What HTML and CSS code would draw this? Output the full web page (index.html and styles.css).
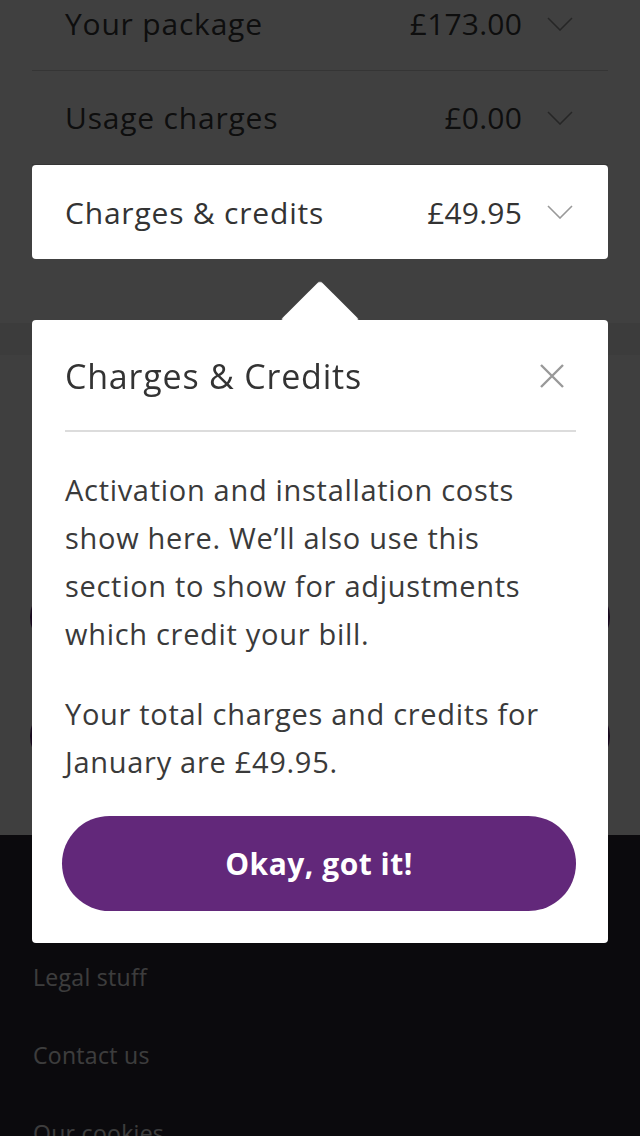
FILE: index.html
```html
<!DOCTYPE html>
<html lang="en">
<head>
<meta charset="utf-8">
<title>Bill breakdown</title>
<link rel="stylesheet" href="styles.css">
</head>
<body>
<main class="page">
  <section class="summary">
    <div class="row">
      <span class="row__label">Your package</span>
      <span class="row__amount">£173.00</span>
      <svg class="chevron" viewBox="0 0 26 14" width="26" height="14"><path d="M1 1 L13 13 L25 1" fill="none" stroke="#999" stroke-width="1.6"/></svg>
    </div>
    <div class="row">
      <span class="row__label">Usage charges</span>
      <span class="row__amount">£0.00</span>
      <svg class="chevron" viewBox="0 0 26 14" width="26" height="14"><path d="M1 1 L13 13 L25 1" fill="none" stroke="#999" stroke-width="1.6"/></svg>
    </div>
    <div class="row row--active">
      <span class="row__label">Charges &amp; credits</span>
      <span class="row__amount">£49.95</span>
      <svg class="chevron" viewBox="0 0 26 14" width="26" height="14"><path d="M1 1 L13 13 L25 1" fill="none" stroke="#999" stroke-width="1.6"/></svg>
    </div>
  </section>
  <div class="band"></div>
  <section class="details">
    <a class="pill"></a>
    <a class="pill"></a>
  </section>
  <footer class="footer">
    <a class="footer__link">Legal stuff</a>
    <a class="footer__link">Contact us</a>
    <a class="footer__link">Our cookies</a>
  </footer>
</main>
<div class="overlay"></div>
<div class="popover">
  <div class="popover__head">
    <h2 class="popover__title">Charges &amp; Credits</h2>
    <svg class="popover__close" viewBox="0 0 26 26" width="26" height="26"><path d="M2 2 L24 24 M24 2 L2 24" fill="none" stroke="#999" stroke-width="2.4"/></svg>
  </div>
  <div class="popover__body">
    <p>Activation and installation costs show here. We’ll also use this section to show for adjustments which credit your bill.</p>
    <p>Your total charges and credits for January are £49.95.</p>
  </div>
  <button class="popover__btn">Okay, got it!</button>
</div>
</body>
</html>
```
FILE: styles.css
```css
* { box-sizing: border-box; }
html, body {
  margin: 0;
  padding: 0;
  width: 640px;
  height: 1136px;
  overflow: hidden;
  font-family: "Open Sans", "Liberation Sans", sans-serif;
}
.page {
  display: flex;
  flex-direction: column;
  height: 1136px;
  overflow: hidden;
}
.summary {
  background: #fff;
  margin-top: -23px;
  padding: 0 32px 64px;
  display: flex;
  flex-direction: column;
}
.row {
  display: flex;
  align-items: center;
  height: 94px;
  padding: 0 35px 0 33px;
  border-bottom: 1px solid #d4d4d4;
  font-size: 30px;
  letter-spacing: 0.8px;
  color: #3a3a3a;
}
.row__label { flex: 1; }
.row__amount { margin-right: 25px; letter-spacing: 0.2px; }
.chevron { display: block; }
.row--active {
  position: relative;
  z-index: 2;
  height: 94px;
  border-bottom: none;
  border-radius: 4px;
  background: #fff;
  color: #333;
}
.band {
  height: 32px;
  background: #f0f0f0;
}
.details {
  background: #fcfcfc;
  height: 480px;
  padding: 228px 30px 0;
  display: flex;
  flex-direction: column;
  gap: 51px;
}
.pill {
  display: block;
  height: 68px;
  border-radius: 34px;
  background: #62287a;
}
.footer {
  flex: 1;
  background: #2c2834;
  padding: 126px 33px 0;
  display: flex;
  flex-direction: column;
  gap: 45px;
  overflow: hidden;
}
.footer__link {
  font-size: 23px;
  line-height: 33px;
  letter-spacing: 0.3px;
  color: #f4f4f4;
}
.overlay {
  position: fixed;
  inset: 0;
  background: rgba(0, 0, 0, 0.75);
  z-index: 1;
}
.popover {
  position: absolute;
  top: 320px;
  left: 32px;
  width: 576px;
  background: #fff;
  border-radius: 4px;
  z-index: 3;
  padding: 0 32px 32px 33px;
  color: #333;
}
.popover::before {
  content: "";
  position: absolute;
  left: 260px;
  top: -28px;
  width: 56px;
  height: 56px;
  background: #fff;
  border-radius: 4px;
  transform: rotate(45deg);
}
.popover__head {
  position: relative;
  display: flex;
  align-items: center;
  justify-content: space-between;
  padding: 32px 11px 30px 0;
  border-bottom: 2px solid #dcdcdc;
}
.popover__title {
  margin: 0;
  font-size: 34px;
  font-weight: 400;
  line-height: 48px;
  letter-spacing: 0.8px;
}
.popover__close { display: block; }
.popover__body {
  padding-top: 34px;
}
.popover__body p {
  margin: 0 0 32px;
  font-size: 29px;
  line-height: 48px;
  letter-spacing: 0.7px;
  color: #3a3a3a;
}
.popover__body p:last-child { margin-bottom: 30px; }
.popover__btn {
  display: block;
  width: 514px;
  margin-left: -3px;
  height: 95px;
  border: none;
  border-radius: 48px;
  background: #62287a;
  color: #fff;
  font-family: inherit;
  font-size: 30px;
  font-weight: 700;
  letter-spacing: 0.5px;
}
```
